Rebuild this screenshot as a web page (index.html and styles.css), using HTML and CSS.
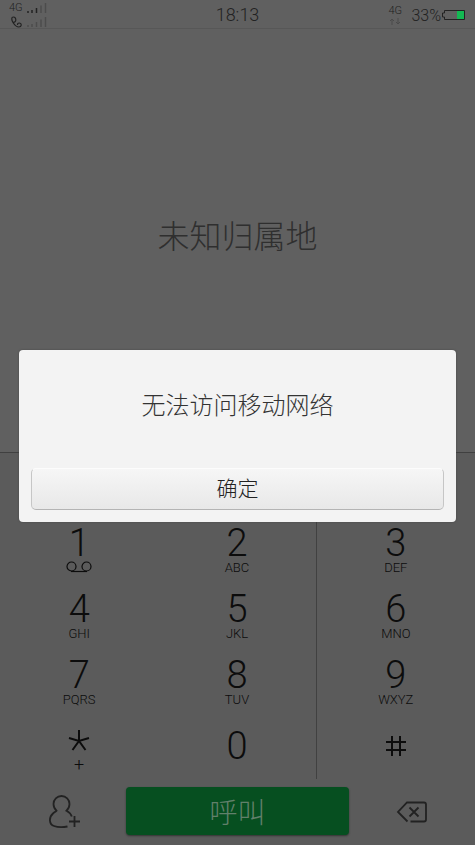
FILE: index.html
```html
<!DOCTYPE html>
<html lang="zh-CN">
<head>
<meta charset="utf-8">
<meta name="viewport" content="width=device-width, initial-scale=1">
<title>拨号</title>
<link rel="stylesheet" href="styles.css">
</head>
<body>
<div class="phone">
  <header class="status">
    <div class="status-left">
      <div class="sim">
        <span class="net">4G</span>
        <svg class="bars" viewBox="0 0 20 10" width="20" height="10" aria-hidden="true"><path class="on" d="M1 8v2M5 7v3M9.500 5v5"/><path class="off" d="M14 2.500V10M18.500 0v10"/></svg>
      </div>
      <div class="sim">
        <svg class="handset" viewBox="0 0 14 12" width="14" height="12" aria-hidden="true"><path d="M4.500 1C2 1 2.500 4 4 6.500s4 4.500 6 4.500c2.500 0 3-3 1-3.800C9 6.500 8.500 8 8.500 9M4.500 6c1 .3 2.300-.5 2.300-2S6 1 4.500 1"/></svg>
        <svg class="bars" viewBox="0 0 20 10" width="20" height="10" aria-hidden="true"><path class="off" d="M1 8v2M5 7v3M9.500 5v5M14 2.500V10M18.500 0v10"/></svg>
      </div>
    </div>
    <time class="clock">18:13</time>
    <div class="status-right">
      <div class="data">
        <span class="net">4G</span>
        <svg viewBox="0 0 14 7" width="14" height="7" aria-hidden="true"><path d="M4 7V1M2 3l2-2 2 2M10 0v6M8 4l2 2 2-2"/></svg>
      </div>
      <span class="percent">33%</span>
      <svg class="battery" viewBox="0 0 25 12" width="25" height="12" aria-hidden="true"><path class="shell" d="M3.500 1.500h20v9h-20v-2.500h-2v-4h2z"/><path class="charge" d="M16 2h7v8h-7z"/></svg>
    </div>
  </header>

  <main class="dialer">
    <div class="location">未知归属地</div>
    <div class="readout"></div>
    <div class="keypad">
      <button class="key" type="button"><span class="digit">1</span><svg class="voicemail" viewBox="0 0 26 12" width="26" height="12" aria-label="语音信箱"><circle cx="5.500" cy="5.500" r="4.500"/><circle cx="20.500" cy="5.500" r="4.500"/><path d="M5 10.500h16"/></svg></button>
      <button class="key" type="button"><span class="digit">2</span><span class="letters">ABC</span></button>
      <button class="key" type="button"><span class="digit">3</span><span class="letters">DEF</span></button>
      <button class="key" type="button"><span class="digit">4</span><span class="letters">GHI</span></button>
      <button class="key" type="button"><span class="digit">5</span><span class="letters">JKL</span></button>
      <button class="key" type="button"><span class="digit">6</span><span class="letters">MNO</span></button>
      <button class="key" type="button"><span class="digit">7</span><span class="letters">PQRS</span></button>
      <button class="key" type="button"><span class="digit">8</span><span class="letters">TUV</span></button>
      <button class="key" type="button"><span class="digit">9</span><span class="letters">WXYZ</span></button>
      <button class="key key-star" type="button" aria-label="星号"><svg viewBox="0 0 22 22" width="22" height="22" aria-hidden="true"><path d="M11 0v11M1 8l10 3 10-3M4.500 20L11 11l6.500 9"/></svg><span class="plus">+</span></button>
      <button class="key key-single" type="button"><span class="digit">0</span></button>
      <button class="key key-single" type="button" aria-label="井号"><svg viewBox="0 0 22 22" width="22" height="22" aria-hidden="true"><path d="M7 1v20M15 1v20M1 7h20M1 15h20"/></svg></button>
    </div>
    <div class="actions">
      <button class="tool" type="button" aria-label="新建联系人"><svg viewBox="0 0 34 36" width="34" height="36" aria-hidden="true"><path d="M21.500 33.500c-4 .8-10 .8-13.500-.5-5-1.500-5.500-8.500-1-12.500 1.500-1.300 3-2 3.500-2.800C8.500 15.800 7.500 13.500 7.500 11c0-4.500 3.500-8 8-8s8 3.500 8 8c0 2.500-1 4.800-3 6.700 2.500 1.300 4.500 3.300 5.300 5.800"/><path d="M28.500 23v11M23 28.500h11"/></svg></button>
      <button class="call" type="button">呼叫</button>
      <button class="tool" type="button" aria-label="删除"><svg viewBox="0 0 34 24" width="34" height="24" aria-hidden="true"><path d="M12.500 22.500L3 13l9-9.500h17q2 0 2 2v15q0 2-2 2H15.500"/><path d="M14.500 8.500l9 9M23.500 8.500l-9 9"/></svg></button>
    </div>
  </main>

  <div class="overlay">
    <section class="dialog" role="alertdialog" aria-labelledby="message">
      <p class="message" id="message">无法访问移动网络</p>
      <button class="confirm" type="button">确定</button>
    </section>
  </div>
</div>
</body>
</html>
```

FILE: styles.css
```css
* {
  box-sizing: border-box;
}

body {
  margin: 0;
  background: #606060;
  color: #0c0c0c;
  font-family: Roboto, "Noto Sans CJK SC", sans-serif;
  font-weight: 300;
}

button {
  border: 0;
  padding: 0;
  background: none;
  color: inherit;
  font: inherit;
}

svg {
  display: block;
  fill: none;
  stroke: currentColor;
}

.phone {
  position: relative;
  display: flex;
  flex-direction: column;
  min-height: 100vh;
}

/* Status bar */
.status {
  display: grid;
  grid-template-columns: 1fr auto 1fr;
  align-items: center;
  height: 29px;
  padding: 2px 9px 0;
  border-bottom: 1px solid #575757;
  color: #222;
}

.status-left {
  display: flex;
  flex-direction: column;
  gap: 2px;
}

.sim {
  display: flex;
  align-items: center;
  gap: 4px;
  height: 12px;
}

.net {
  display: block;
  width: 14px;
  font-size: 11px;
  line-height: 12px;
}

.bars {
  stroke-width: 1.5;
}

.bars .off {
  stroke: #4c4c4c;
}

.handset {
  stroke-width: 1.2;
}

.clock {
  font-size: 18px;
  line-height: 26px;
}

.status-right {
  display: flex;
  justify-content: flex-end;
  align-items: center;
}

.data {
  display: flex;
  flex-direction: column;
  gap: 1px;
  margin-right: 9px;
}

.data svg {
  stroke: #4a4a4a;
}

.percent {
  font-size: 16px;
}

.battery .shell {
  stroke: #222;
}

.battery .charge {
  fill: #14b853;
  stroke: none;
}

/* Dialer */
.dialer {
  flex: 1;
  display: flex;
  flex-direction: column;
}

.location {
  flex: 1;
  display: flex;
  align-items: center;
  justify-content: center;
  padding-bottom: 14px;
  color: #2f2f2f;
  font-size: 32px;
}

.readout {
  height: 63px;
  border-top: 1px solid #404040;
  background: #5b5b5b;
}

.keypad {
  display: grid;
  grid-template-columns: repeat(3, 1fr);
  grid-auto-rows: 66px;
  background: #5b5b5b;
}

.key {
  display: flex;
  flex-direction: column;
  align-items: center;
  padding-top: 10px;
}

.key:nth-child(3n + 2) {
  border-right: 1px solid #414141;
}

.digit {
  font-size: 38px;
  line-height: 36px;
}

.letters {
  font-size: 13px;
  line-height: 14px;
}

.plus {
  font-size: 18px;
  line-height: 14px;
}

.voicemail {
  stroke-width: 1.2;
}

.key-star svg,
.key-single svg {
  stroke-width: 2;
}

.key-star {
  gap: 6px;
  padding-top: 17px;
}

.key-single {
  justify-content: center;
  padding-top: 0;
}

.actions {
  display: grid;
  grid-template-columns: 1fr 223px 1fr;
  height: 66px;
  padding: 8px 0 10px;
  background: #5b5b5b;
}

.tool {
  display: flex;
  align-items: center;
  justify-content: center;
  color: #222;
}

.tool svg {
  stroke-width: 1.8;
}

.call {
  border-radius: 4px;
  background: #064f20;
  box-shadow: 0 1px 2px #333;
  color: #62806b;
  font-size: 28px;
}

/* Alert */
.overlay {
  position: absolute;
  inset: 27px 0 0;
  display: flex;
  align-items: center;
  justify-content: center;
  padding: 0 19px;
}

.dialog {
  flex: 1;
  padding: 38px 12px 12px;
  border-radius: 4px;
  background: #f3f3f3;
  box-shadow: 0 0 2px #444;
}

.message {
  margin: 0 0 44px;
  color: #333;
  font-size: 24px;
  line-height: 36px;
  text-align: center;
}

.confirm {
  display: block;
  width: 100%;
  height: 42px;
  padding-bottom: 4px;
  border: 1px solid #c6c6c6;
  border-top-color: #fcfcfc;
  border-bottom-color: #b4b4b4;
  border-radius: 5px;
  background: linear-gradient(#f6f6f6, #e8e8e8);
  color: #222;
  font-size: 21px;
}
```
